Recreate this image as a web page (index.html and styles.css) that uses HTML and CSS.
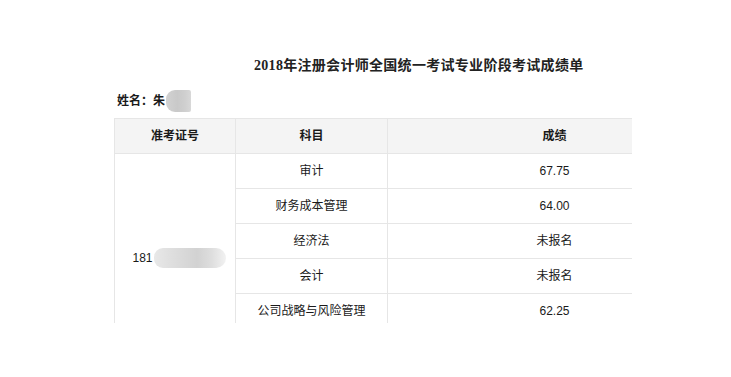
FILE: index.html
```html
<!DOCTYPE html>
<html lang="zh-CN">
<head>
<meta charset="utf-8">
<title>成绩单</title>
<link rel="stylesheet" href="styles.css">
</head>
<body>
<div class="page">
  <h1 class="title">2018年注册会计师全国统一考试专业阶段考试成绩单</h1>
  <div class="name">姓名：朱<span class="blur-name"></span></div>
  <div class="clip">
    <table class="score">
      <colgroup>
        <col class="c1">
        <col class="c2">
        <col class="c3">
      </colgroup>
      <thead>
        <tr>
          <th>准考证号</th>
          <th>科目</th>
          <th>成绩</th>
        </tr>
      </thead>
      <tbody>
        <tr>
          <td class="id-cell" rowspan="5">181<span class="blur-id"></span></td>
          <td>审计</td>
          <td>67.75</td>
        </tr>
        <tr><td>财务成本管理</td><td>64.00</td></tr>
        <tr><td>经济法</td><td>未报名</td></tr>
        <tr><td>会计</td><td>未报名</td></tr>
        <tr><td>公司战略与风险管理</td><td>62.25</td></tr>
      </tbody>
    </table>
  </div>
</div>
</body>
</html>
```

FILE: styles.css
```css
html, body {
  margin: 0;
  padding: 0;
  background: #ffffff;
}

.page {
  padding-left: 114px;
  color: #1a1a1a;
  font-family: "Liberation Sans", "Noto Sans CJK SC", sans-serif;
}

.title {
  margin: 0 0 0 140px;
  padding-top: 56px;
  font-family: "Liberation Serif", "Noto Sans CJK SC", serif;
  font-size: 14px;
  line-height: 20px;
  font-weight: bold;
  letter-spacing: 0.3px;
  color: #222;
}

.name {
  margin: 15px 0 0 3px;
  height: 20px;
  font-size: 12px;
  line-height: 20px;
  font-weight: bold;
  display: flex;
  align-items: center;
}

.blur-name {
  display: inline-block;
  width: 25px;
  height: 22px;
  margin-left: 1px;
  border-radius: 9px 2px 2px 9px;
  background: linear-gradient(90deg, #d2d2d2 0%, #c9c9c9 45%, #cfcfcf 75%, #d8d8d8 100%);
  filter: blur(0.6px);
}

.clip {
  margin-top: 7px;
  width: 518px;
  height: 205px;
  overflow: hidden;
}

.score {
  width: 608px;
  table-layout: fixed;
  border-collapse: separate;
  border-spacing: 0;
  border-top: 1px solid #e6e6e6;
  border-left: 1px solid #e6e6e6;
  font-size: 12px;
}

.score th,
.score td {
  padding: 0;
  height: 34px;
  text-align: center;
  vertical-align: middle;
  border-right: 1px solid #e6e6e6;
  border-bottom: 1px solid #e6e6e6;
  line-height: 16px;
}

.score th {
  background: #f4f4f4;
  font-weight: bold;
  color: #1a1a1a;
}

.c1 { width: 121px; }
.c2 { width: 152px; }
.c3 { width: 334px; }

.score td.id-cell {
  padding-top: 36px;
  padding-left: 8px;
}

.blur-id {
  display: inline-block;
  vertical-align: middle;
  width: 72px;
  height: 20px;
  margin-left: 1px;
  margin-top: -3px;
  border-radius: 9px 10px 10px 9px;
  background: linear-gradient(90deg, #e8e8e8 0%, #e0e0e0 20%, #d9d9d9 40%, #d2d2d2 60%, #dedede 80%, #f2f2f2 100%);
  filter: blur(0.6px);
}
```
